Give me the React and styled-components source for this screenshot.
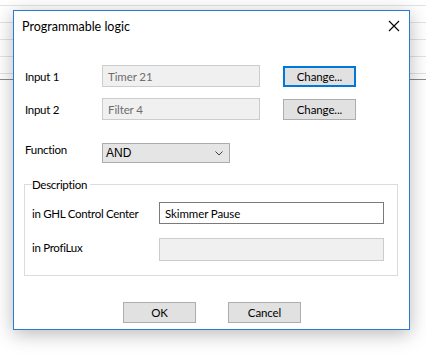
import React from 'react';
import styled, { createGlobalStyle } from 'styled-components';

const GlobalStyle = createGlobalStyle`
  html, body {
    margin: 0;
    padding: 0;
    background: #ffffff;
  }
  body {
    font-family: Lato, "Noto Sans", sans-serif;
    font-size: 11px;
    color: #000;
  }
`;

const Screen = styled.div`
  position: relative;
  width: 426px;
  height: 354px;
  overflow: hidden;
  background: #ffffff;
`;

// the window lying behind the dialog
const BackRows = styled.div`
  display: flex;
  flex-direction: column;
  padding-top: 5px;
`;

const BackRow = styled.div`
  height: ${props => (props.short ? 5 : 16)}px;
  border-top: 1px solid ${props => (props.dark ? '#8a8a8a' : '#e3e3e3')};
`;

const Dialog = styled.div`
  position: absolute;
  left: 13px;
  top: 10px;
  width: 395px;
  height: 318px;
  background: #ffffff;
  border: 1px solid #2b7bd6;
  box-shadow: 0 4px 18px rgba(0, 0, 0, 0.28);
  display: flex;
  flex-direction: column;
`;

const TitleBar = styled.div`
  height: 30px;
  display: flex;
  align-items: center;
  justify-content: space-between;
  padding: 0 9px 0 8px;
`;

const Title = styled.span`
  font-size: 12.5px;
`;

const CloseIcon = styled.svg`
  width: 12px;
  height: 12px;
`;

const Body = styled.div`
  display: flex;
  flex-direction: column;
  padding: 24px 0 0 11px;
  font-size: 11.5px;
  letter-spacing: -0.3px;
`;

const Row = styled.div`
  display: grid;
  grid-template-columns: 77px 158px 23px 73px;
  align-items: center;
  height: 22px;
  margin-bottom: ${props => props.gap || 0}px;
`;

const Label = styled.span`
  position: relative;
  top: ${props => props.lift || 0}px;
`;

const Field = styled.div`
  box-sizing: border-box;
  border: 1px solid ${props => (props.disabled ? '#cccccc' : '#7a7a7a')};
  background: ${props => (props.disabled ? '#f0f0f0' : '#ffffff')};
  color: ${props => (props.disabled ? '#6d6d6d' : '#000')};
  height: ${props => props.h || 22}px;
  padding: 0 5px;
  display: flex;
  align-items: center;
  letter-spacing: -0.1px;
`;

const Button = styled.button`
  font-family: inherit;
  font-size: 11.5px;
  letter-spacing: -0.1px;
  color: #000;
  width: 73px;
  height: 21px;
  box-sizing: border-box;
  background: #e1e1e1;
  border: ${props => (props.focused ? '2px solid #0078d7' : '1px solid #adadad')};
  padding: 0;
  margin: 0;
  display: flex;
  align-items: center;
  justify-content: center;
`;

const Select = styled.div`
  width: 128px;
  height: 20px;
  box-sizing: border-box;
  background: #e5e5e5;
  border: 1px solid #acacac;
  display: flex;
  align-items: center;
  justify-content: space-between;
  padding: 0 6px 0 3px;
  font-family: "Liberation Sans", Arial, sans-serif;
  font-size: 12px;
  letter-spacing: 0;
`;

const Group = styled.fieldset`
  margin: 0 11px 0 -1px;
  padding: 11px 13px 0 7px;
  border: 1px solid #dcdcdc;
  display: flex;
  flex-direction: column;
  gap: 14px;
  min-width: 0;
  height: 98px;
  box-sizing: border-box;
`;

const Legend = styled.legend`
  padding: 0 3px 0 0;
  margin-left: 0;
`;

const DescRow = styled.div`
  display: grid;
  grid-template-columns: 127px 225px;
  align-items: center;
`;

const Footer = styled.div`
  margin-top: auto;
  display: flex;
  justify-content: center;
  gap: 32px;
  padding-bottom: 6px;
  padding-left: 1px;
`;

const Chevron = () => (
  <svg width="8" height="5" viewBox="0 0 8 5">
    <path d="M0.5 0.5 L4 4 L7.5 0.5" fill="none" stroke="#404040" strokeWidth="1" />
  </svg>
);

export default function App() {
  return (
    <Screen>
      <GlobalStyle />
      <BackRows>
        <BackRow />
        <BackRow />
        <BackRow />
        <BackRow />
        <BackRow short />
        <BackRow dark />
      </BackRows>
      <Dialog>
        <TitleBar>
          <Title>Programmable logic</Title>
          <CloseIcon viewBox="0 0 12 12">
            <path d="M1 1 L11 11 M11 1 L1 11" stroke="#000" strokeWidth="1.1" fill="none" />
          </CloseIcon>
        </TitleBar>
        <Body>
          <Row gap={11}>
            <Label>Input 1</Label>
            <Field disabled>Timer 21</Field>
            <span />
            <Button focused>Change...</Button>
          </Row>
          <Row gap={22}>
            <Label>Input 2</Label>
            <Field disabled>Filter 4</Field>
            <span />
            <Button>Change...</Button>
          </Row>
          <Row gap={14}>
            <Label lift={-4}>Function</Label>
            <Select>
              <span>AND</span>
              <Chevron />
            </Select>
          </Row>
          <Group>
            <Legend>Description</Legend>
            <DescRow>
              <Label>in GHL Control Center</Label>
              <Field>Skimmer Pause</Field>
            </DescRow>
            <DescRow>
              <Label lift={-2}>in ProfiLux</Label>
              <Field disabled h={23} />
            </DescRow>
          </Group>
        </Body>
        <Footer>
          <Button>OK</Button>
          <Button>Cancel</Button>
        </Footer>
      </Dialog>
    </Screen>
  );
}
